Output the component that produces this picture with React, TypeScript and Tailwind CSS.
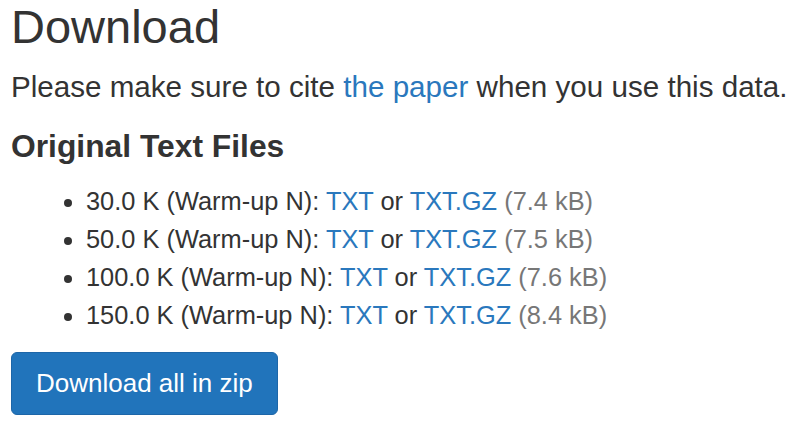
const files = [
  { size: '30.0 K', gz: '7.4 kB' },
  { size: '50.0 K', gz: '7.5 kB' },
  { size: '100.0 K', gz: '7.6 kB' },
  { size: '150.0 K', gz: '8.4 kB' },
]

export default function App() {
  return (
    <div className="min-h-screen bg-white pl-[11px] text-[#333333] font-['Liberation_Sans',Arial,sans-serif]">
      <h1 className="m-0 text-[47px] leading-[54px] font-normal">Download</h1>

      <p className="mt-[13px] text-[29.6px] leading-[40px] whitespace-nowrap">
        Please make sure to cite{' '}
        <a href="#" className="text-[#2a78bd] no-underline">
          the paper
        </a>{' '}
        when you use this data.
      </p>

      <h3 className="mt-[22px] text-[31.8px] leading-[34px] font-bold">Original Text Files</h3>

      <ul className="mt-[19px] list-disc pl-[75px] text-[25.4px] leading-[38px]">
        {files.map((f) => (
          <li key={f.size} className="whitespace-nowrap">
            {f.size} (Warm-up N):{' '}
            <a href="#" className="text-[#2a78bd]">
              TXT
            </a>{' '}
            or{' '}
            <a href="#" className="text-[#2a78bd]">
              TXT.GZ
            </a>{' '}
            <span className="text-[#777777]">({f.gz})</span>
          </li>
        ))}
      </ul>

      <button
        type="button"
        className="mt-[18px] rounded-[6px] border border-[#1d66a8] bg-[#2174bb] px-[24px] py-[12px] text-[26px] leading-[37px] text-white"
      >
        Download all in zip
      </button>
    </div>
  )
}
